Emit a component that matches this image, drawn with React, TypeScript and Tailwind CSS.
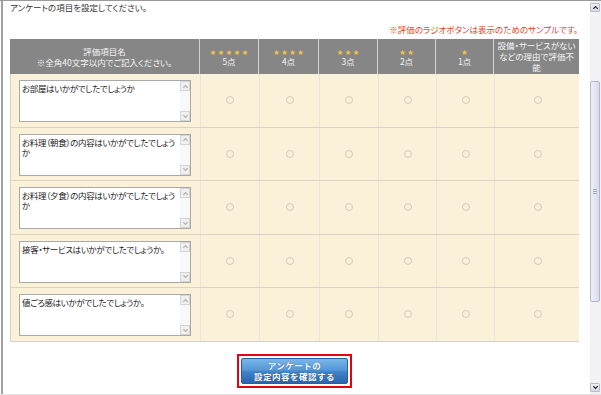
import React from "react";

const questions = [
  "お部屋はいかがでしたでしょうか",
  "お料理（朝食）の内容はいかがでしたでしょう\nか",
  "お料理（夕食）の内容はいかがでしたでしょう\nか",
  "接客・サービスはいかがでしたでしょうか。",
  "値ごろ感はいかがでしたでしょうか。",
];

const starCounts = [5, 4, 3, 2, 1];

const cols = "grid grid-cols-[189px_59px_60px_59px_58px_58px_86px]";

const Chevron = ({ up, className }: { up?: boolean; className?: string }) => (
  <svg viewBox="0 0 8 8" className={className}>
    <polyline
      points={up ? "1.5,5.5 4,3 6.5,5.5" : "1.5,2.5 4,5 6.5,2.5"}
      fill="none"
      stroke="currentColor"
      strokeWidth="1.3"
    />
  </svg>
);

const FakeTextarea = ({ text }: { text: string }) => (
  <div className="flex h-[42px] w-[172px] border border-[#a9a9a9] bg-white">
    <div className="flex-1 whitespace-pre-line pl-[2px] pt-[2px] leading-[10px] tracking-[-0.35px] text-[#222]">{text}</div>
    <div className="flex w-[10px] flex-col bg-[#f8f8f8]">
      <div className="flex h-[10px] items-center justify-center border border-[#d4d4d4] bg-[#f0f0f0] text-[#b0b0b0]">
        <Chevron up className="h-[7px] w-[7px]" />
      </div>
      <div className="flex-1" />
      <div className="flex h-[10px] items-center justify-center border border-[#d4d4d4] bg-[#f0f0f0] text-[#b0b0b0]">
        <Chevron className="h-[7px] w-[7px]" />
      </div>
    </div>
  </div>
);

const ScrollButton = ({ up, className }: { up?: boolean; className?: string }) => (
  <div
    className={`flex h-[9px] w-[10px] items-center justify-center rounded-[1px] border border-[#b9bccb] bg-[linear-gradient(#eef0f6,#d8dbe6)] text-[#222] ${className ?? ""}`}
  >
    <Chevron up={up} className="h-[7px] w-[7px]" />
  </div>
);

const PageScrollbar = () => (
  <div className="flex w-[12px] flex-col border-l border-white bg-[#f2f2f6]">
    <ScrollButton up className="mt-[2px]" />
    <div className="mt-[69px] flex h-[221px] w-[10px] items-center justify-center rounded-[2px] border border-[#b2b6cb] bg-[linear-gradient(90deg,#eef0f9,#d8dbee)]">
      <div className="flex flex-col gap-px">
        <span className="h-px w-[4px] bg-[#a4a8c0]" />
        <span className="h-px w-[4px] bg-[#a4a8c0]" />
        <span className="h-px w-[4px] bg-[#a4a8c0]" />
      </div>
    </div>
    <ScrollButton className="mb-[2px] mt-auto" />
  </div>
);

export default function App() {
  return (
    <div className="flex h-[395px] w-[601px] overflow-hidden border-y border-t-[#9a9a9a] border-b-[#e2e2e2] bg-white font-['Noto_Sans_CJK_JP',sans-serif] text-[8.5px] text-[#333] [font-feature-settings:'palt']">
      <div className="ml-px flex flex-1 flex-col border-l-2 border-[#a2a2a2] pl-[7px]">
        <p className="leading-[12px]">アンケートの項目を設定してください。</p>
        <p className="mt-[10px] w-[569px] pr-px text-right leading-[12px] text-[#e2461d]">
          ※評価のラジオボタンは表示のためのサンプルです。
        </p>

        <div className="mt-[4px] w-[569px]">
          <div className={`${cols} h-[35px] bg-[#868686] leading-[10px] text-[#f5f5f5]`}>
            <div className="flex items-center justify-center text-center leading-[11px]">
              評価項目名
              <br />
              ※全角40文字以内でご記入ください。
            </div>
            {starCounts.map((n) => (
              <div key={n} className="flex flex-col items-center justify-center border-l border-[#d2d2d2]">
                <div className="flex gap-[2px] text-[6px] leading-[8px] text-[#f3c843]">
                  {Array.from({ length: n }).map((_, i) => (
                    <span key={i}>★</span>
                  ))}
                </div>
                <span>{n}点</span>
              </div>
            ))}
            <div className="flex items-center justify-center border-l border-[#d2d2d2] text-center leading-[11px]">
              設備・サービスがない
              <br />
              などの理由で評価不
              <br />
              能
            </div>
          </div>

          {questions.map((q) => (
            <div key={q} className={`${cols} h-[53.5px] border-b border-l border-[#d9d3c7] bg-[#fbf0d8]`}>
              <div className="pl-[8px] pt-[6px]">
                <FakeTextarea text={q} />
              </div>
              {Array.from({ length: 6 }).map((_, i) => (
                <div key={i} className="flex items-center justify-center border-l border-[#ebe5d9]">
                  <span className="h-[8px] w-[8px] rounded-full border border-[#d4ccbb]" />
                </div>
              ))}
            </div>
          ))}
        </div>

        <div className="mt-[12px] flex w-[569px] justify-center">
          <div className="h-[34px] w-[115px] border-2 border-[#e60012] p-[2px]">
            <button className="flex h-full w-full flex-col items-center justify-center rounded-[2px] border border-[#2d5f9e] bg-[linear-gradient(180deg,#7ab6e8_0%,#5598d8_45%,#3f82c9_55%,#2a64ae_100%)] text-[8.5px] font-bold leading-[11px] tracking-[0.5px] text-white [font-feature-settings:normal] [text-shadow:0_0_1px_#1d4c8a]">
              <span>アンケートの</span>
              <span>設定内容を確認する</span>
            </button>
          </div>
        </div>
      </div>
      <PageScrollbar />
    </div>
  );
}
